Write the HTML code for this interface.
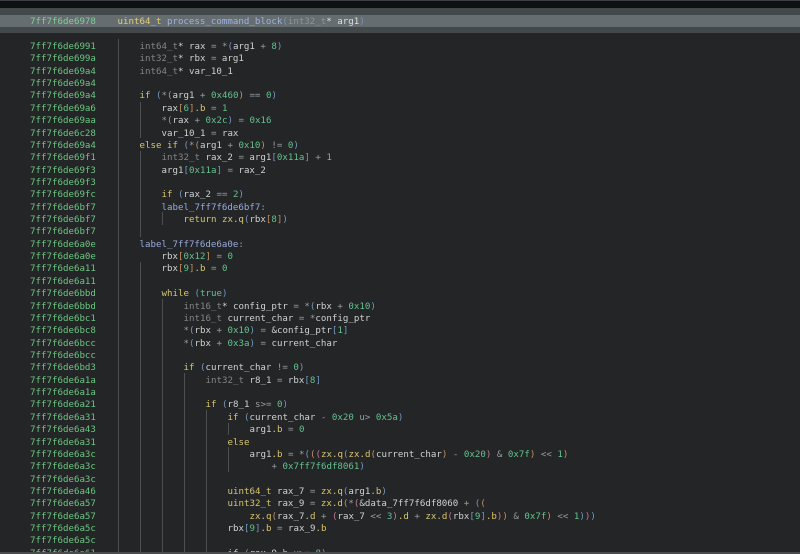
<!DOCTYPE html>
<html>
<head>
<meta charset="utf-8">
<style>
html,body{margin:0;padding:0;background:#232527;}
#w{position:relative;width:800px;height:554px;overflow:hidden;background:#232527;font-family:"DejaVu Sans Mono","Liberation Mono",monospace;font-size:9.13px;color:#cfd1d1;}
.b{position:absolute;left:0;width:800px;}
.v{position:absolute;width:1.4px;background:#4c4e50;}
#t{position:absolute;left:0;top:41px;width:800px;height:512px;overflow:hidden;filter:blur(.35px);}
#t div{position:relative;height:12.37px;line-height:12.37px;padding-left:139.5px;white-space:pre;}
#t div>i:first-child,#h>i:first-child{position:absolute;left:30px;top:0;font-style:normal;color:#6cc680;}
.i1{margin-left:22px}.i2{margin-left:44px}.i3{margin-left:66px}.i4{margin-left:88px}.i5{margin-left:110px}.i6{margin-left:132px}
span{display:inline}
.t{color:#838586}.k{color:#d8c56c}.n{color:#64c28e}.o{color:#989ea1}.l{color:#98aadb}
.p1{color:#7497c2}.p2{color:#c69060}.p3{color:#c27799}.m{color:#d8c56c}
#h{position:absolute;left:0;top:16px;width:800px;height:12.35px;line-height:13px;padding-left:117.5px;white-space:pre;filter:blur(.3px);box-sizing:border-box;}
#h i{font-style:normal}
</style>
</head>
<body>
<div id="w">
<div class="b" style="top:0;height:1px;background:#3a4048"></div>
<div class="b" style="top:1px;height:7px;background:#0e1011"></div>
<div class="b" style="top:8px;height:7px;background:#43484a"></div>
<div class="b" style="top:15px;height:12px;background:#666d70"></div>
<div class="b" style="top:27px;height:6px;background:#43484a"></div>
<div id="h"><i style="color:#7fd093">7ff7f6de6978</i><span style="color:#e2cd70">uint64_t</span> <span style="color:#9db2e2">process_command_block</span><span class="p1">(</span><span style="color:#8f9496">int32_t</span><span style="color:#dcdede">* arg1</span><span class="p1">)</span></div>

<div class="v" style="left:117.5px;top:39px;height:513px"></div>
<div class="v" style="left:140px;top:102px;height:36px"></div>
<div class="v" style="left:140px;top:151px;height:86px"></div>
<div class="v" style="left:140px;top:262px;height:290px"></div>
<div class="v" style="left:162px;top:212px;height:13px"></div>
<div class="v" style="left:162px;top:299px;height:253px"></div>
<div class="v" style="left:184px;top:373px;height:179px"></div>
<div class="v" style="left:206px;top:410px;height:142px"></div>
<div class="v" style="left:228px;top:423px;height:12px"></div>
<div class="v" style="left:228px;top:447px;height:25px"></div>

<div id="t">
<div><i>7ff7f6de6991</i><span class="t">int64_t</span>* rax <span class="o">=</span> <span class="o">*</span><span class="p1">(</span>arg1 <span class="o">+</span> <span class="n">8</span><span class="p1">)</span></div>
<div><i>7ff7f6de699a</i><span class="t">int32_t</span>* rbx <span class="o">=</span> arg1</div>
<div><i>7ff7f6de69a4</i><span class="t">int64_t</span>* var_10_1</div>
<div><i>7ff7f6de69a4</i></div>
<div><i>7ff7f6de69a4</i><span class="k">if</span> <span class="p1">(</span><span class="o">*</span><span class="p2">(</span>arg1 <span class="o">+</span> <span class="n">0x460</span><span class="p2">)</span> <span class="o">==</span> <span class="n">0</span><span class="p1">)</span></div>
<div><i>7ff7f6de69a6</i><span class="i1">rax<span class="p2">[</span><span class="n">6</span><span class="p2">]</span><span class="m">.b</span> <span class="o">=</span> <span class="n">1</span></span></div>
<div><i>7ff7f6de69aa</i><span class="i1"><span class="o">*</span><span class="p1">(</span>rax <span class="o">+</span> <span class="n">0x2c</span><span class="p1">)</span> <span class="o">=</span> <span class="n">0x16</span></span></div>
<div><i>7ff7f6de6c28</i><span class="i1">var_10_1 <span class="o">=</span> rax</span></div>
<div><i>7ff7f6de69a4</i><span class="k">else if</span> <span class="p1">(</span><span class="o">*</span><span class="p2">(</span>arg1 <span class="o">+</span> <span class="n">0x10</span><span class="p2">)</span> <span class="o">!=</span> <span class="n">0</span><span class="p1">)</span></div>
<div><i>7ff7f6de69f1</i><span class="i1"><span class="t">int32_t</span> rax_2 <span class="o">=</span> arg1<span class="p1">[</span><span class="n">0x11a</span><span class="p1">]</span> <span class="o">+</span> <span class="n">1</span></span></div>
<div><i>7ff7f6de69f3</i><span class="i1">arg1<span class="p1">[</span><span class="n">0x11a</span><span class="p1">]</span> <span class="o">=</span> rax_2</span></div>
<div><i>7ff7f6de69f3</i></div>
<div><i>7ff7f6de69fc</i><span class="i1"><span class="k">if</span> <span class="p1">(</span>rax_2 <span class="o">==</span> <span class="n">2</span><span class="p1">)</span></span></div>
<div><i>7ff7f6de6bf7</i><span class="i1 l">label_7ff7f6de6bf7<span class="o">:</span></span></div>
<div><i>7ff7f6de6bf7</i><span class="i2"><span class="k">return zx.q</span><span class="p1">(</span>rbx<span class="p2">[</span><span class="n">8</span><span class="p2">]</span><span class="p1">)</span></span></div>
<div><i>7ff7f6de6bf7</i></div>
<div><i>7ff7f6de6a0e</i><span class="l">label_7ff7f6de6a0e<span class="o">:</span></span></div>
<div><i>7ff7f6de6a0e</i><span class="i1">rbx<span class="p2">[</span><span class="n">0x12</span><span class="p2">]</span> <span class="o">=</span> <span class="n">0</span></span></div>
<div><i>7ff7f6de6a11</i><span class="i1">rbx<span class="p2">[</span><span class="n">9</span><span class="p2">]</span><span class="m">.b</span> <span class="o">=</span> <span class="n">0</span></span></div>
<div><i>7ff7f6de6a11</i></div>
<div><i>7ff7f6de6bbd</i><span class="i1"><span class="k">while</span> <span class="p1">(</span><span class="n">true</span><span class="p1">)</span></span></div>
<div><i>7ff7f6de6bbd</i><span class="i2"><span class="t">int16_t</span>* config_ptr <span class="o">=</span> <span class="o">*</span><span class="p1">(</span>rbx <span class="o">+</span> <span class="n">0x10</span><span class="p1">)</span></span></div>
<div><i>7ff7f6de6bc1</i><span class="i2"><span class="t">int16_t</span> current_char <span class="o">=</span> <span class="o">*</span>config_ptr</span></div>
<div><i>7ff7f6de6bc8</i><span class="i2"><span class="o">*</span><span class="p1">(</span>rbx <span class="o">+</span> <span class="n">0x10</span><span class="p1">)</span> <span class="o">=</span> &amp;config_ptr<span class="p1">[</span><span class="n">1</span><span class="p1">]</span></span></div>
<div><i>7ff7f6de6bcc</i><span class="i2"><span class="o">*</span><span class="p1">(</span>rbx <span class="o">+</span> <span class="n">0x3a</span><span class="p1">)</span> <span class="o">=</span> current_char</span></div>
<div><i>7ff7f6de6bcc</i></div>
<div><i>7ff7f6de6bd3</i><span class="i2"><span class="k">if</span> <span class="p1">(</span>current_char <span class="o">!=</span> <span class="n">0</span><span class="p1">)</span></span></div>
<div><i>7ff7f6de6a1a</i><span class="i3"><span class="t">int32_t</span> r8_1 <span class="o">=</span> rbx<span class="p1">[</span><span class="n">8</span><span class="p1">]</span></span></div>
<div><i>7ff7f6de6a1a</i></div>
<div><i>7ff7f6de6a21</i><span class="i3"><span class="k">if</span> <span class="p1">(</span>r8_1 <span class="o">s&gt;=</span> <span class="n">0</span><span class="p1">)</span></span></div>
<div><i>7ff7f6de6a31</i><span class="i4"><span class="k">if</span> <span class="p1">(</span>current_char <span class="o">-</span> <span class="n">0x20</span> <span class="o">u&gt;</span> <span class="n">0x5a</span><span class="p1">)</span></span></div>
<div><i>7ff7f6de6a43</i><span class="i5">arg1<span class="m">.b</span> <span class="o">=</span> <span class="n">0</span></span></div>
<div><i>7ff7f6de6a31</i><span class="i4 k">else</span></div>
<div><i>7ff7f6de6a3c</i><span class="i5">arg1<span class="m">.b</span> <span class="o">=</span> <span class="o">*</span><span class="p1">(</span><span class="p2">(</span><span class="p3">(</span><span class="k">zx.q</span><span class="p1">(</span><span class="k">zx.d</span><span class="p2">(</span>current_char<span class="p2">)</span> <span class="o">-</span> <span class="n">0x20</span><span class="p3">)</span> <span class="o">&amp;</span> <span class="n">0x7f</span><span class="p2">)</span> <span class="o">&lt;&lt;</span> <span class="n">1</span><span class="p2">)</span></span></div>
<div><i>7ff7f6de6a3c</i><span class="i6"><span class="o">+</span> <span class="n">0x7ff7f6df8061</span><span class="p1">)</span></span></div>
<div><i>7ff7f6de6a3c</i></div>
<div><i>7ff7f6de6a46</i><span class="i4"><span class="k">uint64_t</span> rax_7 <span class="o">=</span> <span class="k">zx.q</span><span class="p1">(</span>arg1<span class="m">.b</span><span class="p1">)</span></span></div>
<div><i>7ff7f6de6a57</i><span class="i4"><span class="k">uint32_t</span> rax_9 <span class="o">=</span> <span class="k">zx.d</span><span class="p2">(</span><span class="o">*</span><span class="p3">(</span>&amp;data_7ff7f6df8060 <span class="o">+</span> <span class="p1">(</span><span class="p2">(</span></span></div>
<div><i>7ff7f6de6a57</i><span class="i5"><span class="k">zx.q</span><span class="p2">(</span>rax_7<span class="m">.d</span> <span class="o">+</span> <span class="p3">(</span>rax_7 <span class="o">&lt;&lt;</span> <span class="n">3</span><span class="p3">)</span><span class="m">.d</span> <span class="o">+</span> <span class="k">zx.d</span><span class="p3">(</span>rbx<span class="p1">[</span><span class="n">9</span><span class="p1">]</span><span class="m">.b</span><span class="p3">)</span><span class="p2">)</span> <span class="o">&amp;</span> <span class="n">0x7f</span><span class="p2">)</span> <span class="o">&lt;&lt;</span> <span class="n">1</span><span class="p1">)</span><span class="p3">)</span><span class="p1">)</span></span></div>
<div><i>7ff7f6de6a5c</i><span class="i4">rbx<span class="p1">[</span><span class="n">9</span><span class="p1">]</span><span class="m">.b</span> <span class="o">=</span> rax_9<span class="m">.b</span></span></div>
<div><i>7ff7f6de6a5c</i></div>
<div><i>7ff7f6de6a61</i><span class="i4"><span class="k">if</span> <span class="p1">(</span>rax_9<span class="m">.b</span> <span class="o">u&gt;=</span> <span class="n">8</span><span class="p1">)</span></span></div>
</div>
<div class="b" style="top:552px;height:2px;background:#4a4b4c"></div>
</div>
</body>
</html>
